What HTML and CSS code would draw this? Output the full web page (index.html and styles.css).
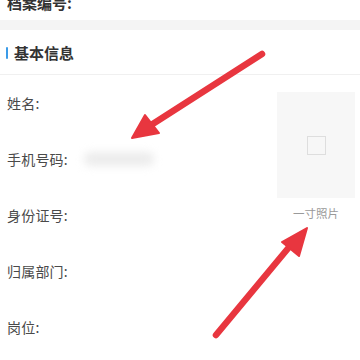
FILE: index.html
```html
<!DOCTYPE html>
<html lang="zh">
<head>
<meta charset="utf-8">
<link rel="stylesheet" href="styles.css">
</head>
<body>
<div class="page">
  <div class="top-row"><span class="top-label">档案编号:</span></div>
  <div class="band"></div>
  <div class="section-head"><span class="bar"></span><span class="section-title">基本信息</span></div>
  <div class="form">
    <div class="fields">
      <div class="row"><span class="label">姓名:</span></div>
      <div class="row"><span class="label">手机号码:</span><span class="blurred"></span></div>
      <div class="row"><span class="label">身份证号:</span></div>
      <div class="row"><span class="label">归属部门:</span></div>
      <div class="row"><span class="label">岗位:</span></div>
    </div>
    <div class="photo-col">
      <div class="photo"><span class="photo-icon"></span></div>
      <div class="photo-label">一寸照片</div>
    </div>
  </div>
  <svg class="arrows" width="360" height="360" viewBox="0 0 360 360">
    <line x1="262" y1="54" x2="148" y2="127" stroke="#e8363f" stroke-width="6.5" stroke-linecap="round"/>
    <polygon points="132,138 145,115 159,133" fill="#e8363f" stroke="#e8363f" stroke-width="2" stroke-linejoin="round"/>
    <line x1="216" y1="335" x2="295" y2="240" stroke="#e8363f" stroke-width="6.5" stroke-linecap="round"/>
    <polygon points="307,228 282,242 299,256" fill="#e8363f" stroke="#e8363f" stroke-width="2" stroke-linejoin="round"/>
  </svg>
</div>
</body>
</html>
```
FILE: styles.css
```css
html, body {
  margin: 0;
  padding: 0;
  background: #fff;
}
.page {
  position: relative;
  width: 360px;
  height: 360px;
  overflow: hidden;
  font-family: "Noto Sans CJK SC", "Noto Sans", sans-serif;
  color: #444;
}
.top-row {
  height: 20px;
  padding-left: 7px;
  overflow: hidden;
}
.top-label {
  display: block;
  font-size: 15px;
  font-weight: 700;
  color: #333;
  line-height: 15px;
  margin-top: -5px;
}
.band {
  height: 10px;
  background: #f4f4f4;
}
.section-head {
  height: 44px;
  display: flex;
  align-items: center;
  padding-left: 6px;
  gap: 6px;
  border-bottom: 1px solid #f0f0f0;
}
.bar {
  width: 2px;
  height: 12px;
  background: #3b9be8;
  border-radius: 1px;
  margin-top: 1px;
}
.section-title {
  font-size: 15px;
  font-weight: 700;
  color: #333;
}
.form {
  display: flex;
}
.fields {
  flex: 1;
}
.row {
  height: 56px;
  display: flex;
  align-items: center;
  padding-left: 7px;
}
.label {
  font-size: 14px;
  color: #4a4a4a;
  letter-spacing: 0.2px;
}
.blurred {
  width: 70px;
  height: 14px;
  margin-left: 16px;
  background: #ececec;
  border-radius: 6px;
  filter: blur(4px);
}
.photo-col {
  width: 78px;
  margin-top: 17px;
  margin-right: 5px;
  display: flex;
  flex-direction: column;
  align-items: center;
}
.photo {
  width: 78px;
  height: 106px;
  background: #f7f7f7;
  display: flex;
  align-items: center;
  justify-content: center;
}
.photo-icon {
  width: 17px;
  height: 17px;
  border: 1.5px solid #dedede;
}
.photo-label {
  margin-top: 7px;
  font-size: 11.5px;
  color: #9a9a9a;
  line-height: 16px;
}
.arrows {
  position: absolute;
  left: 0;
  top: 0;
}
```
